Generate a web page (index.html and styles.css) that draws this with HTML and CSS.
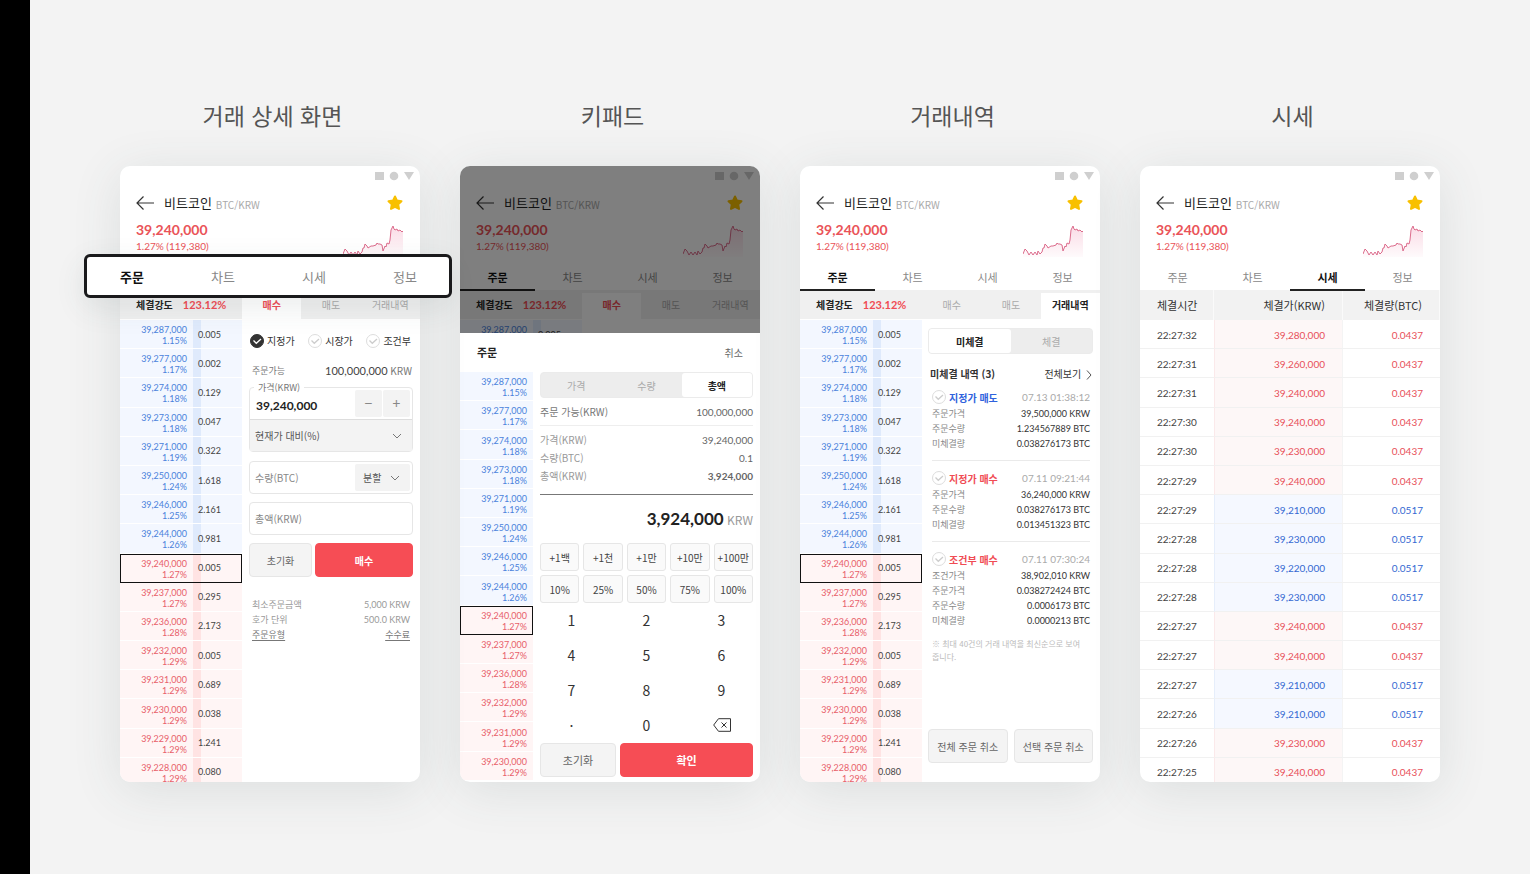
FILE: index.html
```html
<!DOCTYPE html>
<html lang="ko">
<head>
    <meta charset="UTF-8">
    <meta name="viewport" content="width=device-width, initial-scale=1.0">
    <title>거래 화면</title>
    <link rel="stylesheet" href="styles.css">
</head>
<body>
    <svg class="defs" width="0" height="0" aria-hidden="true">
        <defs>
            <linearGradient id="fade" x1="0" y1="0" x2="0" y2="1">
                <stop offset="0" stop-color="#f3a6c0" stop-opacity=".4"/>
                <stop offset="1" stop-color="#f3a6c0" stop-opacity=".05"/>
            </linearGradient>
            <symbol id="chevron" viewBox="0 0 10 6"><path d="M1 1l4 4 4-4" fill="none" stroke="currentColor"/></symbol>
            <symbol id="check" viewBox="0 0 12 12"><path d="M2.500 5.500l2.800 2.800 4.700-4.300" fill="none" stroke="currentColor" stroke-width="1.300"/></symbol>
        </defs>
    </svg>

    <main class="board">
        <section class="screen">
            <h2>거래 상세 화면</h2>
            <div class="frame">
                <div class="phone">
                    <header class="top" data-tab="none"></header>
                    <nav class="subtabs" data-active="매수"></nav>
                    <div class="split">
                        <table class="ladder" data-rows="16"></table>
                        <form class="panel order">
                            <div class="types">
                                <label><input type="radio" name="type" checked><svg><use href="#check"/></svg>지정가</label>
                                <label><input type="radio" name="type"><svg><use href="#check"/></svg>시장가</label>
                                <label><input type="radio" name="type"><svg><use href="#check"/></svg>조건부</label>
                            </div>
                            <div class="available"><span>주문가능</span><span><b class="num">100,000,000</b> KRW</span></div>
                            <div class="price-box">
                                <label for="price">가격(KRW)</label>
                                <div class="price-row">
                                    <input id="price" class="num" type="text" value="39,240,000">
                                    <button type="button" aria-label="감소">−</button>
                                    <button type="button" aria-label="증가">+</button>
                                </div>
                                <div class="select ratio">
                                    <select aria-label="현재가 대비"><option>현재가 대비(%)</option></select>
                                    <svg><use href="#chevron"/></svg>
                                </div>
                            </div>
                            <div class="field">
                                <input type="text" placeholder="수량(BTC)" aria-label="수량(BTC)">
                                <div class="select part">
                                    <select aria-label="분할"><option>분할</option></select>
                                    <svg><use href="#chevron"/></svg>
                                </div>
                            </div>
                            <div class="field"><input type="text" placeholder="총액(KRW)" aria-label="총액(KRW)"></div>
                            <div class="actions">
                                <button type="reset" class="btn">초기화</button>
                                <button type="button" class="btn red">매수</button>
                            </div>
                            <div class="info">
                                <p><span>최소주문금액</span><span class="num">5,000 KRW</span></p>
                                <p><span>호가 단위</span><span class="num">500.0 KRW</span></p>
                                <p><a href="#">주문유형</a><a href="#">수수료</a></p>
                            </div>
                        </form>
                    </div>
                </div>
                <nav class="callout">
                    <a href="#" class="on">주문</a><a href="#">차트</a><a href="#">시세</a><a href="#">정보</a>
                </nav>
            </div>
        </section>

        <section class="screen">
            <h2>키패드</h2>
            <div class="phone">
                <div class="behind">
                    <header class="top" data-tab="주문"></header>
                    <nav class="subtabs" data-active="매수"></nav>
                    <table class="ladder single" data-rows="1"></table>
                </div>
                <div class="sheet">
                    <div class="sheet-head"><h3>주문</h3><button>취소</button></div>
                    <div class="split">
                        <table class="ladder narrow" data-rows="14"></table>
                        <div class="pad">
                            <div class="segment three"><button>가격</button><button>수량</button><button class="on">총액</button></div>
                            <p class="line first"><span>주문 가능(KRW)</span><span class="num">100,000,000</span></p>
                            <div class="lines">
                                <p class="line"><span>가격(KRW)</span><span class="num">39,240,000</span></p>
                                <p class="line"><span>수량(BTC)</span><span class="num">0.1</span></p>
                                <p class="line"><span>총액(KRW)</span><b class="num">3,924,000</b></p>
                            </div>
                            <p class="total"><b>3,924,000</b> <span>KRW</span></p>
                            <div class="quick">
                                <button>+1백</button><button>+1천</button><button>+1만</button><button>+10만</button><button>+100만</button>
                                <button>10%</button><button>25%</button><button>50%</button><button>75%</button><button>100%</button>
                            </div>
                            <div class="keys">
                                <button>1</button><button>2</button><button>3</button>
                                <button>4</button><button>5</button><button>6</button>
                                <button>7</button><button>8</button><button>9</button>
                                <button>·</button><button>0</button>
                                <button aria-label="지우기"><svg width="18" height="14" viewBox="0 0 18 14" fill="none" stroke="#333"><path d="M5.500 .7h12v12.600h-12L.7 7z"/><path d="M8.500 4.500l5 5m0-5l-5 5"/></svg></button>
                            </div>
                            <div class="actions wide">
                                <button class="btn">초기화</button>
                                <button class="btn red">확인</button>
                            </div>
                        </div>
                    </div>
                </div>
            </div>
        </section>

        <section class="screen">
            <h2>거래내역</h2>
            <div class="phone">
                <header class="top" data-tab="주문"></header>
                <nav class="subtabs" data-active="거래내역"></nav>
                <div class="split">
                    <table class="ladder" data-rows="16"></table>
                    <div class="panel history">
                        <div class="segment"><button class="on">미체결</button><button>체결</button></div>
                        <div class="history-head">
                            <h3>미체결 내역 (3)</h3>
                            <a href="#">전체보기 <svg width="6" height="10" viewBox="0 0 6 10"><path d="M1 .5L5 5 1 9.500" fill="none" stroke="#555"/></svg></a>
                        </div>
                        <div id="orders"></div>
                        <p class="note">※ 최대 40건의 거래 내역을 최신순으로 보여줍니다.</p>
                        <div class="actions even">
                            <button class="btn">전체 주문 취소</button>
                            <button class="btn">선택 주문 취소</button>
                        </div>
                    </div>
                </div>
            </div>
        </section>

        <section class="screen">
            <h2>시세</h2>
            <div class="phone">
                <header class="top" data-tab="시세"></header>
                <table class="trades">
                    <thead><tr><th>체결시간</th><th>체결가(KRW)</th><th>체결량(BTC)</th></tr></thead>
                    <tbody id="trades"></tbody>
                </table>
            </div>
        </section>
    </main>

    <script>
        const book = [
            ['39,287,000', '1.15%', '0.005'], ['39,277,000', '1.17%', '0.002'],
            ['39,274,000', '1.18%', '0.129'], ['39,273,000', '1.18%', '0.047'],
            ['39,271,000', '1.19%', '0.322'], ['39,250,000', '1.24%', '1.618'],
            ['39,246,000', '1.25%', '2.161'], ['39,244,000', '1.26%', '0.981'],
            ['39,240,000', '1.27%', '0.005'], ['39,237,000', '1.27%', '0.295'],
            ['39,236,000', '1.28%', '2.173'], ['39,232,000', '1.29%', '0.005'],
            ['39,231,000', '1.29%', '0.689'], ['39,230,000', '1.29%', '0.038'],
            ['39,229,000', '1.29%', '1.241'], ['39,228,000', '1.29%', '0.080']
        ];

        const orders = [
            { type: '지정가 매도', side: 'sell', time: '07.13 01:38:12', rows: [['주문가격', '39,500,000 KRW'], ['주문수량', '1.234567889 BTC'], ['미체결량', '0.038276173 BTC']] },
            { type: '지정가 매수', side: 'buy', time: '07.11 09:21:44', rows: [['주문가격', '36,240,000 KRW'], ['주문수량', '0.038276173 BTC'], ['미체결량', '0.013451323 BTC']] },
            { type: '조건부 매수', side: 'buy', time: '07.11 07:30:24', rows: [['조건가격', '38,902,010 KRW'], ['주문가격', '0.038272424 BTC'], ['주문수량', '0.0006173 BTC'], ['미체결량', '0.0000213 BTC']] }
        ];

        const trades = [
            ['22:27:32', '39,280,000', 'up'], ['22:27:31', '39,260,000', 'up'],
            ['22:27:31', '39,240,000', 'up'], ['22:27:30', '39,240,000', 'up'],
            ['22:27:30', '39,230,000', 'up'], ['22:27:29', '39,240,000', 'up'],
            ['22:27:29', '39,210,000', 'down'], ['22:27:28', '39,230,000', 'down'],
            ['22:27:28', '39,220,000', 'down'], ['22:27:28', '39,230,000', 'down'],
            ['22:27:27', '39,240,000', 'up'], ['22:27:27', '39,240,000', 'up'],
            ['22:27:27', '39,210,000', 'down'], ['22:27:26', '39,210,000', 'down'],
            ['22:27:26', '39,230,000', 'up'], ['22:27:25', '39,240,000', 'up']
        ];

        const spark = '0,28 2,23 4,25 6,29 8,26 10,29 12,26 14,29 15,25 17,28 19,26 20,22 21,22 22,18 24,20 25,22 28,20 30,20 33,19 34,17 35,18 37,18 39,19 40,25 42,20 43,21 44,17 46,18 47,14 48,4 50,0 51,3 52,4 54,3 55,5 57,4 59,6 60,5';

        document.querySelectorAll('.top').forEach(top => {
            const tab = top.dataset.tab;
            const tabs = tab === 'none' ? '' : ['주문', '차트', '시세', '정보'].map(t => `<a href="#" class="${t === tab ? 'on' : ''}">${t}</a>`).join('');
            top.innerHTML = `
                <div class="status"><svg width="40" height="10" viewBox="0 0 40 10" fill="#cfcfcf"><path d="M1 1h9v8H1zM30 1h10l-5 8z"/><circle cx="20" cy="5" r="4.300"/></svg></div>
                <div class="title">
                    <svg width="18" height="14" viewBox="0 0 18 14" fill="none" stroke="#333" stroke-width="1.2"><path d="M18 7H1M7.500 .5L1 7l6.500 6.500"/></svg>
                    <h1>비트코인</h1><span>BTC/KRW</span>
                    <svg class="star" width="16" height="16" viewBox="0 0 16 16" fill="#f8c000" stroke="#f8c000" stroke-width="2" stroke-linejoin="round"><path d="M8 1.500l2 4.100 4.500.6-3.300 3.200.8 4.500L8 11.800l-4 2.100.8-4.500L1.500 6.200 6 5.600z"/></svg>
                </div>
                <div class="quote">
                    <div><strong>39,240,000</strong><span>1.27% (119,380)</span></div>
                    <svg width="60" height="32" viewBox="0 0 60 32"><polygon points="${spark} 60,31 0,31" fill="url(#fade)"/><polyline points="${spark}" fill="none" stroke="#dc6c8c"/></svg>
                </div>
                <nav class="tabs">${tabs}</nav>`;
        });

        document.querySelectorAll('.subtabs').forEach(nav => {
            nav.innerHTML = '<div class="strength"><b>체결강도</b><b class="num">123.12%</b></div>' +
                ['매수', '매도', '거래내역'].map(t => `<a href="#" class="${t === nav.dataset.active ? 'on' : ''} ${t === '매수' ? 'buy' : ''}">${t}</a>`).join('');
        });

        document.querySelectorAll('.ladder').forEach(table => {
            table.innerHTML = book.slice(0, table.dataset.rows).map(([price, rate, amount], i) => `
                <tr class="${i < 8 ? 'ask' : 'bid'} ${i === 8 ? 'now' : ''}">
                    <td class="price">${price}<br>${rate}</td>
                    ${table.classList.contains('narrow') ? '' : `<td class="amount">${amount}</td>`}
                </tr>`).join('');
        });

        document.getElementById('orders').innerHTML = orders.map(o => `
            <div class="item">
                <div class="item-head">
                    <label class="${o.side}"><input type="checkbox"><svg><use href="#check"/></svg>${o.type}</label>
                    <time>${o.time}</time>
                </div>
                ${o.rows.map(([k, v]) => `<p><span>${k}</span><span class="num">${v}</span></p>`).join('')}
            </div>`).join('');

        document.getElementById('trades').innerHTML = trades.map(([time, price, dir]) => `
            <tr class="${dir}"><td>${time}</td><td>${price}</td><td>${dir === 'up' ? '0.0437' : '0.0517'}</td></tr>`).join('');
    </script>
</body>
</html>
```
FILE: styles.css
```css
* {
    box-sizing: border-box;
}
body {
    margin: 0;
    min-height: 100vh;
    border-left: 30px solid #000;
    background: #f3f3f3;
    color: #333;
    font-family: "Noto Sans CJK KR", sans-serif;
    font-size: 10px;
    line-height: 15px;
}
h1, h2, h3, p {
    margin: 0;
}
a {
    color: inherit;
    text-decoration: none;
}
button, input, select {
    margin: 0;
    padding: 0;
    border: 0;
    background: none;
    color: inherit;
    font: inherit;
    min-width: 0;
}
.defs {
    position: absolute;
}
.num {
    font-family: Lato, sans-serif;
}
.board {
    display: grid;
    grid-template-columns: repeat(4, minmax(0, 1fr));
    gap: 40px;
    padding: 98px 90px 92px;
}
.screen h2 {
    margin-bottom: 34px;
    padding-left: 5px;
    color: #555;
    font-size: 23px;
    font-weight: 400;
    line-height: 34px;
    text-align: center;
}
.frame {
    position: relative;
}
.phone {
    overflow: hidden;
    border-radius: 10px;
    background: #fff;
    box-shadow: 0 8px 50px rgba(60, 80, 80, .12);
}

/* header */
.status {
    display: flex;
    justify-content: flex-end;
    align-items: center;
    height: 20px;
    padding-right: 6px;
}
.title {
    display: flex;
    align-items: center;
    height: 33px;
    padding: 0 17px 0 16px;
}
.title h1 {
    margin: 0 4px 0 10px;
    color: #222;
    font-size: 13px;
    font-weight: 400;
}
.title span {
    margin-top: 4px;
    color: #aaa;
}
.title .star {
    margin-left: auto;
}
.quote {
    display: flex;
    justify-content: space-between;
    height: 44px;
    padding: 2px 17px 0 16px;
    color: #ea5358;
    font-family: Lato, sans-serif;
}
.quote strong {
    display: block;
    font-size: 14px;
    line-height: 18px;
}
.quote svg {
    margin-top: 5px;
}
.tabs {
    display: grid;
    grid-template-columns: repeat(4, 1fr);
    height: 27px;
    color: #888;
    font-size: 11px;
    line-height: 28px;
    text-align: center;
}
.tabs a.on {
    z-index: 1;
    height: 28px;
    border-bottom: 2px solid #222;
    color: #111;
    font-weight: 700;
}
.callout {
    position: absolute;
    top: 88px;
    left: -36px;
    right: -32px;
    display: flex;
    justify-content: space-between;
    height: 44px;
    padding: 0 32px 0 33px;
    border: 3px solid #1a1a1c;
    border-radius: 6px;
    background: #fff;
    box-shadow: 0 10px 30px rgba(60, 80, 80, .1);
    color: #888;
    font-size: 13px;
    line-height: 40px;
}
.callout .on {
    color: #111;
    font-weight: 700;
}
.subtabs {
    display: grid;
    grid-template-columns: 122px 1fr 1fr 1fr;
    height: 30px;
    padding-top: 3px;
    border-bottom: 1px solid #fff;
    background: #f0f0f0;
    color: #aaa;
    line-height: 24px;
    text-align: center;
}
.subtabs a.on {
    background: #fff;
    color: #222;
    font-weight: 700;
}
.subtabs a.buy.on, .strength .num {
    color: #f04c54;
}
.strength {
    display: flex;
    gap: 10px;
    padding-left: 16px;
    color: #222;
}
.strength .num {
    font-size: 11px;
}

/* order book */
.split {
    display: flex;
}
.ladder {
    flex: none;
    width: 122px;
    height: 467px;
    margin-bottom: -5px;
    border-spacing: 0;
    font-family: Lato, sans-serif;
    font-size: 9px;
    line-height: 11px;
}
.ladder td {
    padding: 0;
    border-bottom: 1px solid #fff;
    background: #f3f7ff;
}
.ladder .price {
    width: 73px;
    padding-top: 2px;
    padding-right: 6px;
    color: #4a82dc;
    text-align: right;
}
.ladder .amount {
    padding-left: 5px;
    background: linear-gradient(90deg, #dfeafc 8px, #f3f7ff 8px);
    color: #444;
}
.ladder .bid td {
    background: #fff5f5;
}
.ladder .bid .price {
    color: #e8606a;
}
.ladder .bid .amount {
    background: linear-gradient(90deg, #ffe3e3 8px, #fff5f5 8px);
}
.ladder .now {
    outline: 1px solid #111;
    outline-offset: -1px;
}
.ladder.narrow {
    width: 73px;
    height: 409px;
    margin-bottom: 0;
}
.ladder.single {
    height: 29px;
}

/* order form */
.panel {
    display: flex;
    flex: 1;
    flex-direction: column;
    min-width: 0;
    padding: 8px 7px 0;
}
.types {
    display: flex;
    justify-content: space-between;
    padding: 5px 2px 6px 1px;
    color: #333;
}
.types label, .item-head label {
    position: relative;
    display: flex;
    align-items: center;
    gap: 3px;
}
.types input, .item-head input {
    position: absolute;
    width: 14px;
    height: 14px;
    opacity: 0;
}
.types label svg, .item-head label svg {
    width: 14px;
    height: 14px;
    border: 1px solid #ddd;
    border-radius: 50%;
    color: #ccc;
}
.types input:checked + svg {
    border-color: #333;
    background: #333;
    color: #fff;
}
.available {
    display: flex;
    justify-content: space-between;
    align-items: center;
    padding: 9px 1px 9px 3px;
    color: #777;
}
.available span:first-child {
    font-size: 9px;
}
.available b {
    color: #444;
    font-size: 11px;
    font-weight: 400;
}
.price-box {
    position: relative;
    margin-bottom: 9px;
    border: 1px solid #e6e6e6;
    border-radius: 4px;
}
.price-box label {
    position: absolute;
    top: -8px;
    left: 4px;
    padding: 0 4px;
    background: #fff;
    color: #777;
    font-size: 9px;
}
.price-row {
    display: flex;
    gap: 1px;
    padding: 2px;
    border-bottom: 1px solid #ddd;
}
.price-row input {
    flex: 1;
    width: 0;
    padding: 4px 0 0 4px;
    color: #222;
    font-size: 12px;
    font-weight: 700;
}
.price-row button {
    width: 27px;
    height: 27px;
    border-radius: 2px;
    background: #f3f3f3;
    color: #888;
    font-size: 14px;
}
.select {
    position: relative;
    display: flex;
    align-items: center;
    background: #f3f3f3;
    color: #555;
}
.select select {
    width: 100%;
    height: 100%;
    padding: 0 8px;
    appearance: none;
}
.select svg {
    position: absolute;
    right: 10px;
    width: 10px;
    height: 6px;
    color: #777;
    pointer-events: none;
}
.ratio {
    height: 31px;
}
.ratio select {
    padding-left: 5px;
}
.field {
    display: flex;
    height: 33px;
    margin-bottom: 8px;
    padding: 2px 2px 2px 5px;
    border: 1px solid #e6e6e6;
    border-radius: 4px;
}
.field input {
    flex: 1;
    width: 0;
}
.field input::placeholder {
    color: #888;
}
.part {
    width: 55px;
    border-radius: 2px;
}
.actions {
    display: grid;
    grid-template-columns: 63px 1fr;
    gap: 3px;
}
.actions.wide {
    grid-template-columns: 76px 1fr;
    gap: 4px;
    font-size: 11px;
}
.actions.even {
    grid-template-columns: 1fr 1fr;
    gap: 6px;
    margin-top: auto;
    padding-bottom: 19px;
}
.btn {
    height: 34px;
    border: 1px solid #e6e6e6;
    border-radius: 4px;
    background: #f4f4f4;
    color: #666;
}
.btn.red {
    border-color: #f64d55;
    background: #f64d55;
    color: #fff;
    font-weight: 700;
}
.info {
    padding: 20px 3px 0;
    color: #999;
    font-size: 9px;
}
.info p, .item p {
    display: flex;
    justify-content: space-between;
}
.info a {
    color: #777;
    text-decoration: underline;
    text-underline-offset: 2px;
}

/* keypad sheet */
.behind {
    position: relative;
    height: 167px;
    overflow: hidden;
}
.behind::after {
    content: "";
    position: absolute;
    inset: 0;
    z-index: 2;
    background: rgba(0, 0, 0, .5);
}
.sheet-head {
    display: flex;
    justify-content: space-between;
    align-items: center;
    height: 39px;
    padding: 0 17px;
    color: #666;
}
.sheet-head h3 {
    color: #222;
    font-size: 11px;
}
.pad {
    flex: 1;
    min-width: 0;
    padding: 0 7px 5px;
}
.segment {
    display: grid;
    grid-template-columns: 1fr 1fr;
    height: 26px;
    border: 1px solid #ebebeb;
    border-radius: 4px;
    background: #ededed;
    color: #aaa;
}
.segment.three {
    grid-template-columns: repeat(3, 1fr);
}
.segment .on {
    border-radius: 3px;
    background: #fff;
    color: #222;
    font-weight: 700;
}
.line {
    display: flex;
    justify-content: space-between;
    color: #999;
    line-height: 18px;
}
.line .num {
    color: #666;
}
.line.first {
    padding: 5px 0 4px;
    border-bottom: 1px solid #eee;
    color: #777;
}
.lines {
    padding: 5px 0 9px;
    border-bottom: 1px solid #777;
}
.total {
    padding: 9px 0;
    color: #999;
    font-size: 12px;
    line-height: 29px;
    text-align: right;
}
.total b {
    color: #222;
    font-family: Lato, sans-serif;
    font-size: 17px;
}
.quick {
    display: grid;
    grid-template-columns: repeat(5, minmax(0, 1fr));
    gap: 4px;
}
.quick button {
    height: 28px;
    border: 1px solid #e6e6e6;
    border-radius: 3px;
    background: #fafafa;
    color: #444;
}
.keys {
    display: grid;
    grid-template-columns: repeat(3, 1fr);
    margin: 0 -6px;
    font-size: 14px;
}
.keys button {
    height: 35px;
}

/* history */
.panel.history {
    padding-left: 6px;
}
.history-head {
    display: flex;
    justify-content: space-between;
    padding: 12px 1px 7px 2px;
}
.history-head h3 {
    color: #333;
    font-size: 10px;
}
.history-head svg {
    margin-left: 2px;
    vertical-align: -2px;
}
.item {
    margin: 0 3px 0 4px;
    padding-bottom: 9px;
    color: #888;
    font-size: 9px;
}
.item + .item {
    padding-top: 8px;
    border-top: 1px solid #eaeaea;
}
.item .num {
    color: #333;
}
.item-head {
    display: flex;
    justify-content: space-between;
    align-items: center;
    height: 18px;
    color: #aaa;
    font-family: Lato, sans-serif;
    font-size: 10px;
}
.item-head label {
    font-family: "Noto Sans CJK KR", sans-serif;
    font-weight: 700;
}
.item-head .sell {
    color: #2f62dd;
}
.item-head .buy {
    color: #f04c54;
}
.note {
    padding: 0 10px 0 4px;
    color: #bbb;
    font-size: 8px;
    line-height: 13px;
    word-break: break-all;
}

/* trades */
.trades {
    width: 100%;
    height: 497px;
    margin-bottom: -5px;
    border-spacing: 0;
    table-layout: fixed;
    color: #444;
    font-family: Lato, sans-serif;
    text-align: right;
}
.trades th {
    height: 30px;
    padding: 0 17px 0 0;
    border-right: 1px solid #fafafa;
    background: #f2f2f2;
    color: #333;
    font-family: "Noto Sans CJK KR", sans-serif;
    font-size: 11px;
    font-weight: 400;
}
.trades th:first-child {
    width: 74px;
}
.trades th:nth-child(2) {
    width: 129px;
}
.trades td {
    padding: 2px 17px 0 0;
    border-bottom: 1px solid #f1f1f1;
}
.trades th:first-child, .trades td:first-child {
    padding-right: 0;
    padding-left: 17px;
    text-align: left;
}
.trades td:nth-child(2) {
    border-left: 1px solid #fbe9ea;
    border-right: 1px solid #f4f4f4;
    background: #fdf7f7;
}
.trades .up td + td {
    color: #e8505a;
}
.trades .down td + td {
    color: #3468d2;
}
.trades .down td:nth-child(2) {
    border-left-color: #e6eefb;
    background: #f5f8ff;
}
```
